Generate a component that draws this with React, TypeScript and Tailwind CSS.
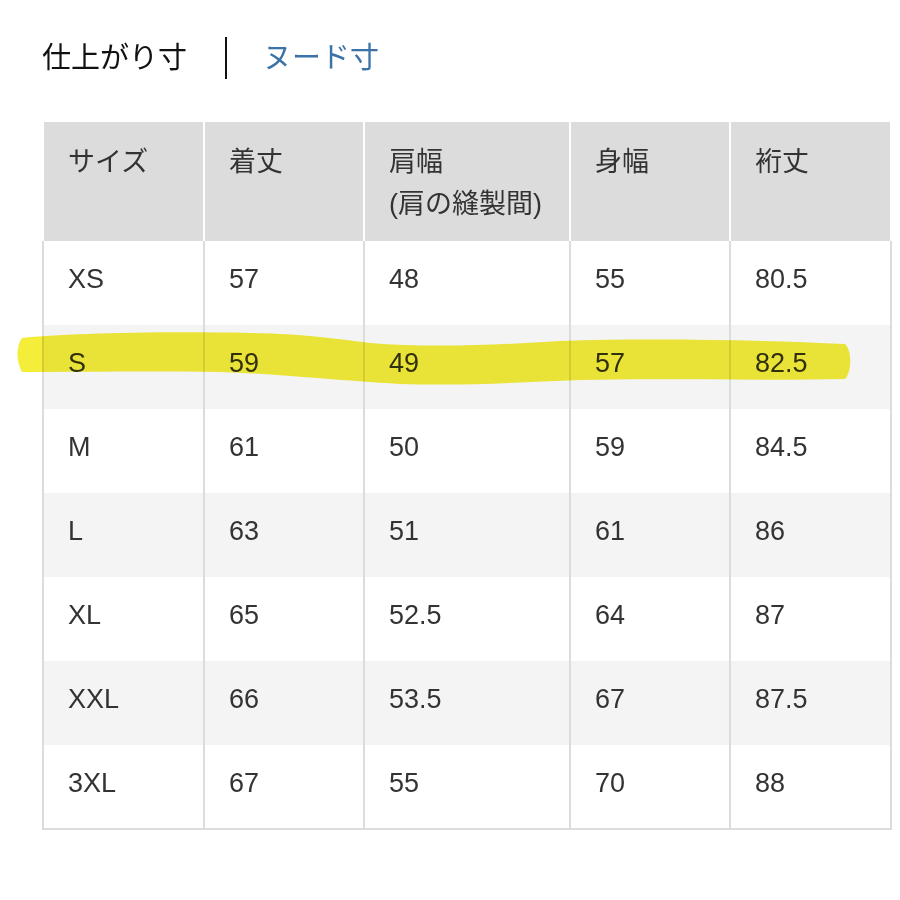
import React from "react";

const rows: string[][] = [
  ["XS", "57", "48", "55", "80.5"],
  ["S", "59", "49", "57", "82.5"],
  ["M", "61", "50", "59", "84.5"],
  ["L", "63", "51", "61", "86"],
  ["XL", "65", "52.5", "64", "87"],
  ["XXL", "66", "53.5", "67", "87.5"],
  ["3XL", "67", "55", "70", "88"],
];

const font = { fontFamily: '"Liberation Sans", "Noto Sans CJK JP", sans-serif' };

export default function App() {
  return (
    <div className="w-[900px] h-[900px] bg-white relative" style={font}>
      <div className="pt-[36px] pl-[42px] flex items-center h-[80px]">
        <span className="text-[29px] leading-[44px] text-[#111]">仕上がり寸</span>
        <span className="ml-[38px] w-[2px] h-[42px] bg-[#111]" />
        <span className="ml-[36px] text-[29px] leading-[44px] text-[#3b73a8]">ヌード寸</span>
      </div>
      <div className="ml-[42px] mt-[42px] w-[848px] relative">
        <table className="w-[848px] table-fixed border-collapse border-2 border-[#dcdcdc] text-[27px] text-[#333]">
          <colgroup>
            <col className="w-[161px]" />
            <col className="w-[160px]" />
            <col className="w-[206px]" />
            <col className="w-[160px]" />
            <col className="w-[161px]" />
          </colgroup>
          <thead>
            <tr className="h-[118px] bg-[#dcdcdc]">
              {["サイズ", "着丈", null, "身幅", "裄丈"].map((h, i) => (
                <th
                  key={i}
                  className="align-top text-left font-normal pl-[24px] pt-[17px] leading-[42px] border-x-2 border-white"
                >
                  {h === null ? (
                    <>
                      肩幅
                      <br />
                      (肩の縫製間)
                    </>
                  ) : (
                    h
                  )}
                </th>
              ))}
            </tr>
          </thead>
          <tbody>
            {rows.map((r, ri) => (
              <tr key={ri} className={`h-[84px] ${ri % 2 === 1 ? "bg-[#f4f4f4]" : "bg-white"}`}>
                {r.map((c, ci) => (
                  <td
                    key={ci}
                    className="align-top pl-[24px] pt-[18px] leading-[40px] border-x-2 border-[#dcdcdc]"
                  >
                    {c}
                  </td>
                ))}
              </tr>
            ))}
          </tbody>
        </table>
      </div>
      <svg
        className="absolute left-0 top-0 pointer-events-none mix-blend-multiply"
        width="900"
        height="900"
        viewBox="0 0 900 900"
      >
        <path
          d="M22 338 C60 334 150 331 250 333 C300 334 330 338 370 343 C430 348 500 345 560 341 C650 338 760 340 845 344 C852 350 852 372 845 379 C760 381 660 378 580 380 C520 382 470 386 400 384 C330 380 280 374 220 372 C150 371 80 372 22 372 C16 362 16 346 22 338 Z"
          fill="#f3ec2e"
          opacity="0.95"
        />
      </svg>
    </div>
  );
}
